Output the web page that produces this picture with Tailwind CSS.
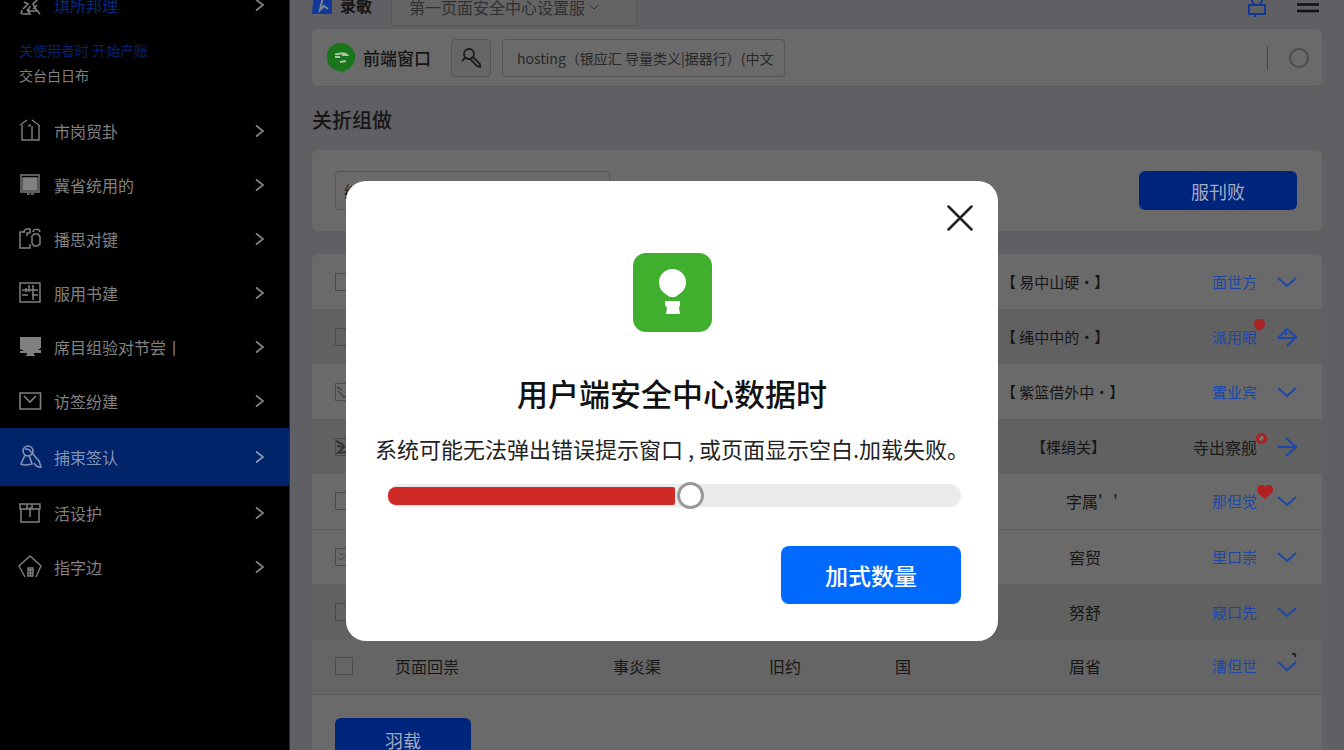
<!DOCTYPE html>
<html lang="zh-CN">
<head>
<meta charset="utf-8">
<meta name="viewport" content="width=device-width, initial-scale=1">
<title>安全中心</title>
<script src="https://cdn.jsdelivr.net/npm/@tailwindcss/browser@4"></script>
</head>
<body class="h-screen overflow-hidden bg-[#5f5f64] font-['Noto_Sans_CJK_SC',sans-serif] text-[#161616]">
<svg class="hidden">
  <symbol id="right" viewBox="0 0 12 14"><path d="M2 1.500 9 7 2 12.500" fill="none" stroke="currentColor" stroke-width="1.800"/></symbol>
  <symbol id="down" viewBox="0 0 20 20"><path d="M1 6 10 14 19 6" fill="none" stroke="currentColor" stroke-width="2"/></symbol>
</svg>
<div class="flex h-full">
  <aside class="flex w-[290px] shrink-0 flex-col overflow-hidden border-r border-[#2c2c30] bg-black text-[#808080]">
    <nav class="flex flex-col text-base">
      <a href="#" class="-mt-[22px] flex h-[54px] shrink-0 items-center gap-3 pr-[23px] pl-[18px]">
        <svg class="size-6" viewBox="0 0 24 24" fill="none" stroke="currentColor" stroke-width="1.600"><path d="M3 5h8M6 9l4 2-5 5M4 21h8l-3-5M13 4l6 3-4 4 2 4 5 6M12 13l-2 5h9M4 17l-1 4M19 12l-4 4"/></svg>
        <span class="grow text-[#0a2a78]">琪所邦理</span><svg class="h-3.5 w-3"><use href="#right"/></svg>
      </a>
      <div class="flex h-[72px] flex-col pt-1.5 pl-[19px] text-sm leading-[25px]">
        <a href="#" class="text-[#06226b]">关使用者时 开始产账</a>
        <a href="#">交台白日布</a>
      </div>
      <a href="#" class="flex h-[54px] items-center gap-3 pr-[23px] pl-[18px]">
        <svg class="size-6" viewBox="0 0 24 24" fill="none" stroke="currentColor" stroke-width="1.400"><path d="M2 6 9 1M14 1l8 6M4 6v15h17V6M10 7l3-1M14 7v13"/></svg>
        <span class="grow">市岗贸卦</span><svg class="h-3.5 w-3"><use href="#right"/></svg>
      </a>
      <a href="#" class="flex h-[54px] items-center gap-3 pr-[23px] pl-[18px]">
        <svg class="size-6" viewBox="0 0 24 24" fill="none" stroke="currentColor" stroke-width="1.400"><path d="M3 2h18v17H3z"/><path d="M5 5h14v12H5z" fill="currentColor"/><path d="M9 21h3m1 0h3"/></svg>
        <span class="grow">冀省统用的</span><svg class="h-3.5 w-3"><use href="#right"/></svg>
      </a>
      <a href="#" class="flex h-[54px] items-center gap-3 pr-[23px] pl-[18px]">
        <svg class="size-6" viewBox="0 0 24 24" fill="none" stroke="currentColor" stroke-width="1.500"><path d="M7 5H2v16h10v-4M5 5l3-3h4v4H9v3M16 7h4l2 3v7l-3 2h-3l-2-3v-7zM15 5c0-3 6-4 7 0"/></svg>
        <span class="grow">播思对键</span><svg class="h-3.5 w-3"><use href="#right"/></svg>
      </a>
      <a href="#" class="flex h-[54px] items-center gap-3 pr-[23px] pl-[18px]">
        <svg class="size-6" viewBox="0 0 24 24" fill="none" stroke="currentColor" stroke-width="1.500"><path d="M2 2h20v19H2zM4 9h16M4 14h6M14 14h6M11 4v7M15 4v15M8 7v4"/></svg>
        <span class="grow">服用书建</span><svg class="h-3.5 w-3"><use href="#right"/></svg>
      </a>
      <a href="#" class="flex h-[54px] items-center gap-3 pr-[23px] pl-[18px]">
        <svg class="size-6" viewBox="0 0 24 24" fill="currentColor"><path d="M2 2h21v11l-3 2h3v3h-7v2h1v1H8v-1h1v-2H2v-2h4l-4-2z"/></svg>
        <span class="grow">席目组验对节尝丨</span><svg class="h-3.5 w-3"><use href="#right"/></svg>
      </a>
      <a href="#" class="flex h-[54px] items-center gap-3 pr-[23px] pl-[18px]">
        <svg class="size-6" viewBox="0 0 24 24" fill="none" stroke="currentColor" stroke-width="1.600"><path d="M2 4h20.500v16H2zM6 7l6 6 6-6"/></svg>
        <span class="grow">访签纷建</span><svg class="h-3.5 w-3"><use href="#right"/></svg>
      </a>
      <a href="#" aria-current="page" class="flex h-[58px] items-center gap-3 bg-[#00236a] pr-[23px] pl-[18px] text-[#8493b5]">
        <svg class="size-6" viewBox="0 0 24 24" fill="none" stroke="currentColor" stroke-width="1.600"><circle cx="10" cy="6" r="5"/><path d="M7 4c3 0 6 1 6 4M7 10l-4 9c3 2 7 1 11 0l-3-9M14 8l7 8 2 6c-3 1-5-1-7-4"/></svg>
        <span class="grow">捕束签认</span><svg class="h-3.5 w-3"><use href="#right"/></svg>
      </a>
      <a href="#" class="flex h-[54px] items-center gap-3 pr-[23px] pl-[18px]">
        <svg class="size-6" viewBox="0 0 24 24" fill="none" stroke="currentColor" stroke-width="1.500"><path d="M3 8v13h18V8M2 3h20v5H2zM9 3v5M14 3v5M12 6v10"/></svg>
        <span class="grow">活设护</span><svg class="h-3.5 w-3"><use href="#right"/></svg>
      </a>
      <a href="#" class="flex h-[54px] items-center gap-3 pr-[23px] pl-[18px]">
        <svg class="size-6" viewBox="0 0 24 24" fill="none" stroke="currentColor" stroke-width="1.400"><path d="M7 22 1 11 12 1l11 10-5 11M10 21v-8h5v8zM10 15h5M10 18h5M12.500 14v7"/></svg>
        <span class="grow">指字边</span><svg class="h-3.5 w-3"><use href="#right"/></svg>
      </a>
    </nav>
  </aside>

  <main class="flex min-w-0 grow flex-col overflow-hidden px-[22px]">
    <header class="flex h-[29px] shrink-0 items-end">
      <div class="flex items-center gap-2 pb-3">
        <svg class="h-6 w-5" viewBox="0 0 20 24"><path d="M2 0h18v21H0z" fill="#12399a"/><path d="M3 0h9l-4 17 4-4 4 3" fill="none" stroke="#7d8796" stroke-width="2"/></svg>
        <strong class="text-base leading-6">录敏</strong>
      </div>
      <button type="button" class="mb-[3px] ml-[19px] flex h-[38px] w-[246px] items-center gap-1 border border-[#555558] bg-[#646466] pl-[17px] text-base text-[#303030]">第一页面安全中心设置服
        <svg class="size-2.5" viewBox="0 0 20 20"><use href="#down"/></svg>
      </button>
      <div class="ml-auto flex items-center gap-[30px] pr-[3px] pb-3">
        <a href="#" aria-label="用户"><svg class="h-6 w-5" viewBox="0 0 20 24" fill="none" stroke="#123796" stroke-width="2"><circle cx="10" cy="7" r="5"/><path d="M2 12h16v9H2zM8 21v3"/></svg></a>
        <button type="button" aria-label="菜单"><svg class="h-6 w-[22px]" viewBox="0 0 22 24" stroke="#111" stroke-width="2.500"><path d="M0 5h22M0 11.500h22M0 18h22"/></svg></button>
      </div>
    </header>

    <section class="flex h-[58px] shrink-0 items-center rounded-md border-b border-[#59595b] bg-[#6a6a6a] pr-[13px] pl-[15px]">
      <svg class="h-[30px] w-7" viewBox="0 0 28 30"><path d="M14 0a14 14 0 0 1 10 24l-2 2-4 1-1 3-4-2A14 14 0 1 1 14 0" fill="#19751a"/><path d="M8 11c4 1 8-3 12 1l-5 0M8 14l5 0M13 19l6-1" fill="none" stroke="#a9c4a5" stroke-width="2"/></svg>
      <span class="ml-2 text-[17px] font-medium">前端窗口</span>
      <button type="button" aria-label="搜索" class="ml-5 flex h-[38px] w-10 items-center justify-center rounded-sm border border-[#555] bg-[#666]">
        <svg class="size-5" viewBox="0 0 20 20" fill="none" stroke="#1c1c1c" stroke-width="1.800"><circle cx="8" cy="6" r="5"/><path d="M5 9l-4 4M9 11l3-2 7 7v3l-3-1z"/></svg>
      </button>
      <input type="text" aria-label="搜索内容" value="hosting（银应汇 导量类义|据器行）(中文" class="ml-[11px] h-[38px] w-[283px] rounded-sm border border-[#555] pr-1 pl-[14px] text-sm text-[#292929]">
      <span class="ml-auto h-6 w-px bg-[#454545]"></span>
      <label class="ml-[21px] flex"><input type="radio" aria-label="选择" class="size-5 appearance-none rounded-full border-2 border-[#4d4d4d]"></label>
    </section>

    <h1 class="flex h-[63px] shrink-0 items-center pt-0.5 text-xl font-medium">关折组做</h1>

    <section class="flex h-[81px] shrink-0 items-center justify-between rounded-md bg-[#6a6a6a] pr-[25px] pl-[23px]">
      <input type="text" aria-label="筛选" value="编" class="h-[39px] w-[275px] rounded-sm border border-[#565656] px-2 text-base">
      <button type="button" class="h-[39px] w-[158px] rounded-md bg-[#00257d] text-lg text-[#a3acc0]">服刊败</button>
    </section>

    <section class="mt-[23px] min-h-0 grow rounded-t-md bg-[#6a6a6a]">
      <table class="w-full table-fixed border-collapse text-base leading-6 [&_td]:p-0 [&_tr]:h-[55px]">
        <colgroup><col class="w-[83px]"><col class="w-[218px]"><col class="w-[156px]"><col class="w-[126px]"><col><col class="w-[160px]"><col class="w-[157px]"></colgroup>
        <tbody>
          <tr>
            <td><input type="checkbox" aria-label="选择第1行" class="ml-[23px] block size-[18px] appearance-none border border-[#4b4b4b]"></td><td></td><td></td><td></td><td></td>
            <td><span class="-ml-1 text-[15px] whitespace-nowrap">【 易中山硬·】</span></td>
            <td><div class="flex items-center justify-end gap-5 pr-[25px] text-[#1c47a8]"><a href="#" class="text-[15px]">面世方</a><svg class="size-5"><use href="#down"/></svg></div></td>
          </tr>
          <tr class="bg-[#616161]">
            <td><input type="checkbox" aria-label="选择第2行" class="ml-[23px] block size-[18px] appearance-none border border-[#4b4b4b]"></td><td></td><td></td><td></td><td></td>
            <td><span class="-ml-1 text-[15px] whitespace-nowrap">【 绳中中的·】</span></td>
            <td><div class="flex items-center justify-end gap-5 pr-[25px] text-[#1c47a8]"><a href="#" class="relative text-[15px]">派用眼<svg class="absolute -top-1.5 -right-2 h-3 w-[11px]" viewBox="0 0 11 12"><path d="M5 12C1 9 0 7 0 4a5.500 4.500 0 0 1 11 0c0 4-2 6-6 8" fill="#a82424"/></svg></a><svg class="size-5" viewBox="0 0 20 20" fill="none" stroke="currentColor" stroke-width="2"><path d="M1 11 10 2l9 8-9 9M1 11h18M9 5v3"/></svg></div></td>
          </tr>
          <tr>
            <td><div class="relative ml-[23px] size-[18px]"><input type="checkbox" aria-label="选择第3行" class="block size-[18px] appearance-none border border-[#4b4b4b]"><svg class="pointer-events-none absolute inset-0 size-[18px]" viewBox="0 0 18 18" fill="none" stroke="#444" stroke-width="1.500"><path d="M2 4l5 3M3 8l6 6 8-4"/></svg></div></td><td></td><td></td><td></td><td></td>
            <td><span class="-ml-1 text-[15px] whitespace-nowrap">【 紫篮借外中·】</span></td>
            <td><div class="flex items-center justify-end gap-5 pr-[25px] text-[#1c47a8]"><a href="#" class="text-[15px]">置业宾</a><svg class="size-5"><use href="#down"/></svg></div></td>
          </tr>
          <tr class="bg-[#616161]">
            <td><div class="relative ml-[23px] size-[18px]"><input type="checkbox" aria-label="选择第4行" class="block size-[18px] appearance-none border border-[#4b4b4b]"><svg class="pointer-events-none absolute inset-0 size-[18px]" viewBox="0 0 18 18" fill="none" stroke="#333" stroke-width="2"><path d="M1 3l8 4M2 8l7 1-6 6 8-1"/></svg></div></td><td></td><td></td><td></td><td></td>
            <td><span class="ml-[26px] text-[15px]">【棵绢关】</span></td>
            <td><div class="flex items-center justify-end gap-5 pr-[25px] text-[#1c47a8]"><a href="#" class="relative text-[#1b1b1b]">寺出察舰<svg class="absolute -top-0.5 -right-2.5 size-[11px]" viewBox="0 0 11 11"><circle cx="5.500" cy="5.500" r="4" fill="none" stroke="#a82424" stroke-width="3"/><path d="M4 7l3-4" stroke="#b88"/></svg></a><svg class="size-5" viewBox="0 0 20 20" fill="none" stroke="currentColor" stroke-width="2"><path d="M1 10h17M9 1l10 9-10 9"/></svg></div></td>
          </tr>
          <tr class="border-b border-[#5b5b5b]">
            <td><input type="checkbox" aria-label="选择第5行" class="ml-[23px] block size-[18px] appearance-none border border-[#4b4b4b]"></td><td></td><td></td><td></td><td></td>
            <td><span class="ml-[61px]">字属' &nbsp; '</span></td>
            <td><div class="flex items-center justify-end gap-5 pr-[25px] text-[#1c47a8]"><a href="#" class="relative text-[15px]">那但觉<svg class="absolute -top-1 -right-4 h-3.5 w-4" viewBox="0 0 16 14"><path d="M8 14 1 8C-1 4 1 0 4 0c2 0 3 0 4 2 1-2 3-2 5-2 3 1 4 5 2 8z" fill="#b02020"/></svg></a><svg class="size-5"><use href="#down"/></svg></div></td>
          </tr>
          <tr>
            <td><div class="relative ml-[23px] size-[18px]"><input type="checkbox" aria-label="选择第6行" class="block size-[18px] appearance-none border border-[#4b4b4b]"><svg class="pointer-events-none absolute inset-0 size-[18px]" viewBox="0 0 18 18" fill="none" stroke="#4b4b4b"><path d="M3 10l3 2 5-4M4 6h6"/></svg></div></td><td></td><td></td><td></td><td></td>
            <td class="text-center">窖贸</td>
            <td><div class="flex items-center justify-end gap-5 pr-[25px] text-[#1c47a8]"><a href="#" class="text-[15px]">里口崇</a><svg class="size-5"><use href="#down"/></svg></div></td>
          </tr>
          <tr class="bg-[#616161]">
            <td><input type="checkbox" aria-label="选择第7行" class="ml-[23px] block size-[18px] appearance-none border border-[#4b4b4b]"></td><td></td><td></td><td></td><td></td>
            <td class="text-center">努舒</td>
            <td><div class="flex items-center justify-end gap-5 pr-[25px] text-[#1c47a8]"><a href="#" class="text-[15px]">窥口先</a><svg class="size-5"><use href="#down"/></svg></div></td>
          </tr>
          <tr class="border-b border-[#5b5b5b] bg-[#656565]">
            <td><input type="checkbox" aria-label="选择第8行" class="ml-[23px] block size-[18px] appearance-none border border-[#4b4b4b]"></td>
            <td>页面回祟</td><td>事炎渠</td><td>旧约</td><td>国</td>
            <td class="text-center">眉省</td>
            <td><div class="flex items-center justify-end gap-5 pr-[25px] text-[#1c47a8]"><a href="#" class="text-[15px]">漕但世</a><svg class="size-5 overflow-visible" viewBox="0 0 20 20"><use href="#down"/><path d="M15-2c3-1 4 1 3 3" stroke="#222" stroke-width="2" fill="none"/></svg></div></td>
          </tr>
        </tbody>
      </table>
      <button type="button" class="mt-[23px] ml-[23px] h-[45px] w-[136px] rounded-md bg-[#00257d] text-lg text-[#a3acc0]">羽载</button>
    </section>
  </main>
</div>

<div class="fixed inset-0 flex items-start justify-center px-4 pt-[181px]">
  <div role="dialog" aria-modal="true" aria-labelledby="dlg-title" class="relative flex w-full max-w-[652px] flex-col items-center rounded-[20px] bg-white px-8 pt-[72px] pb-[37px]">
    <button type="button" aria-label="关闭" class="absolute top-6 right-[25px]"><svg class="size-[26px]" viewBox="0 0 26 26" fill="none" stroke="#222" stroke-width="2.500" stroke-linecap="round"><path d="M1.500 1.500l23 23M24.500 1.500l-23 23"/></svg></button>
    <svg class="size-[79px]" viewBox="0 0 79 79"><rect width="79" height="79" rx="13" fill="#40af2e"/><path d="M39.500 16C47 16 53 22 53 29c0 6-3 10-8 13-3 3-8 3-11 0-5-3-8-7-8-13 0-7 6-13 13.500-13M32 48h15v4l-1 3 1 6H33l1-6-2-3z" fill="#fff"/></svg>
    <h2 id="dlg-title" class="mt-[38px] text-[31px] leading-[46px] font-medium text-[#111]">用户端安全中心数据时</h2>
    <p class="mt-4 text-[22px] leading-8 whitespace-nowrap text-[#222]">系统可能无法弹出错误提示窗口 , 或页面显示空白.加载失败。</p>
    <div class="relative mt-[18px] mr-[5px] flex h-[26px] w-full max-w-[573px] items-center self-end">
      <div class="h-[23px] w-full rounded-full bg-[#ebebeb]"><div class="mt-[3px] h-[18px] rounded-l-lg rounded-r-xs bg-[#cf2928]" style="width:50%"></div></div>
      <input type="range" min="0" max="100" value="53" aria-label="进度" class="absolute inset-0 h-[26px] w-full appearance-none bg-transparent [&::-webkit-slider-thumb]:size-[27px] [&::-webkit-slider-thumb]:appearance-none [&::-webkit-slider-thumb]:rounded-full [&::-webkit-slider-thumb]:border-3 [&::-webkit-slider-thumb]:border-[#999] [&::-webkit-slider-thumb]:bg-white">
    </div>
    <button type="button" class="mt-[38px] mr-[5px] h-[58px] w-[180px] self-end rounded-lg bg-[#006aff] text-[23px] font-medium text-white">加式数量</button>
  </div>
</div>
</body>
</html>
